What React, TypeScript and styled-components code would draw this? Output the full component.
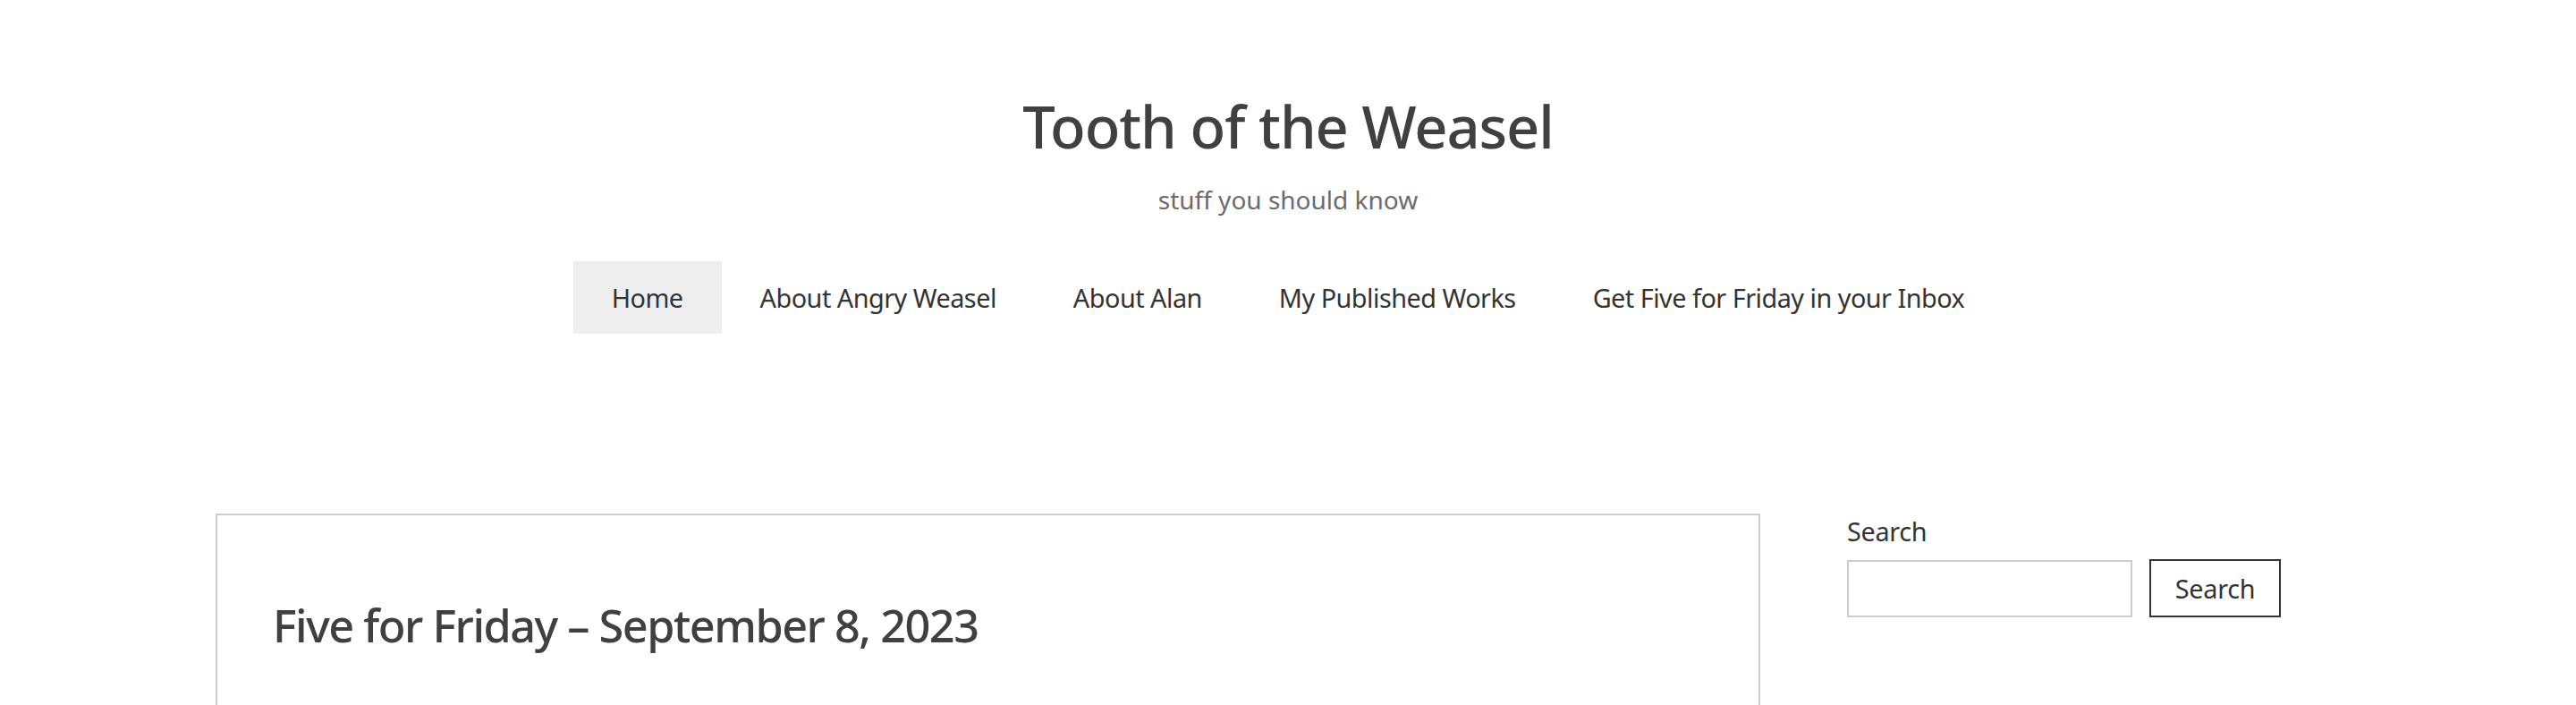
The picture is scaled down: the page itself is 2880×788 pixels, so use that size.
import React from 'react';
import styled, { createGlobalStyle } from 'styled-components';

const GlobalStyle = createGlobalStyle`
  html, body {
    margin: 0;
    padding: 0;
    overflow: hidden;
    background: #fff;
  }
  body {
    font-family: "Noto Sans", "Open Sans", sans-serif;
    color: #333;
  }
`

const Header = styled.header`
  display: flex;
  flex-direction: column;
  align-items: center;
  padding-top: 102px;
`

const SiteTitle = styled.h1`
  margin: 0;
  font-size: 65px;
  line-height: 78px;
  font-weight: 500;
  letter-spacing: -1.1px;
  color: #404040;
`

const Tagline = styled.p`
  margin: 23px 0 0;
  font-size: 28px;
  line-height: 40px;
  color: #6b6b6b;
`

const Nav = styled.nav`
  display: flex;
  justify-content: center;
  margin-top: 49px;
`

const NavItem = styled.a<{ $active?: boolean }>`
  display: block;
  padding: 0 43px;
  height: 81px;
  line-height: 81px;
  font-size: 28.8px;
  letter-spacing: -0.5px;
  color: #333;
  text-decoration: none;
  background: ${p => (p.$active ? '#eeeeee' : 'transparent')};
`

const Content = styled.div`
  display: flex;
  align-items: flex-start;
  gap: 96px;
  width: 2398px;
  margin: 201px auto 0;
`

const Article = styled.article`
  flex: 0 0 1727px;
  box-sizing: border-box;
  min-height: 400px;
  border: 2px solid #cccccc;
  padding: 90px 62px 0;
`

const PostTitle = styled.h2`
  margin: 0;
  font-size: 50.4px;
  line-height: 65px;
  font-weight: 500;
  letter-spacing: -1.5px;
  color: #404040;
`

const Sidebar = styled.aside`
  flex: 1;
  padding-left: 1px;
`

const SearchLabel = styled.label`
  display: block;
  font-size: 28.8px;
  line-height: 40px;
  letter-spacing: -0.3px;
  color: #333;
`

const SearchRow = styled.div`
  display: flex;
  gap: 19px;
  margin-top: 12px;
`

const SearchInput = styled.input`
  box-sizing: border-box;
  width: 319px;
  height: 64px;
  border: 2px solid #cccccc;
  outline: none;
  font-family: inherit;
  font-size: 28px;
  padding: 0 12px;
`

const SearchButton = styled.button`
  box-sizing: border-box;
  width: 147px;
  height: 65px;
  margin-top: -1px;
  border: 2px solid #333;
  background: #fff;
  color: #333;
  font-family: inherit;
  font-size: 28.8px;
  letter-spacing: -0.3px;
  padding: 0;
  cursor: pointer;
`

const navLinks = [
  'Home',
  'About Angry Weasel',
  'About Alan',
  'My Published Works',
  'Get Five for Friday in your Inbox',
]

export default function App() {
  return (
    <>
      <GlobalStyle />
      <Header>
        <SiteTitle>Tooth of the Weasel</SiteTitle>
        <Tagline>stuff you should know</Tagline>
        <Nav>
          {navLinks.map((l, i) => (
            <NavItem key={l} href="#" $active={i === 0}>{l}</NavItem>
          ))}
        </Nav>
      </Header>
      <Content>
        <Article>
          <PostTitle>Five for Friday – September 8, 2023</PostTitle>
        </Article>
        <Sidebar>
          <SearchLabel htmlFor="s">Search</SearchLabel>
          <SearchRow>
            <SearchInput id="s" type="search" />
            <SearchButton type="submit">Search</SearchButton>
          </SearchRow>
        </Sidebar>
      </Content>
    </>
  )
}
